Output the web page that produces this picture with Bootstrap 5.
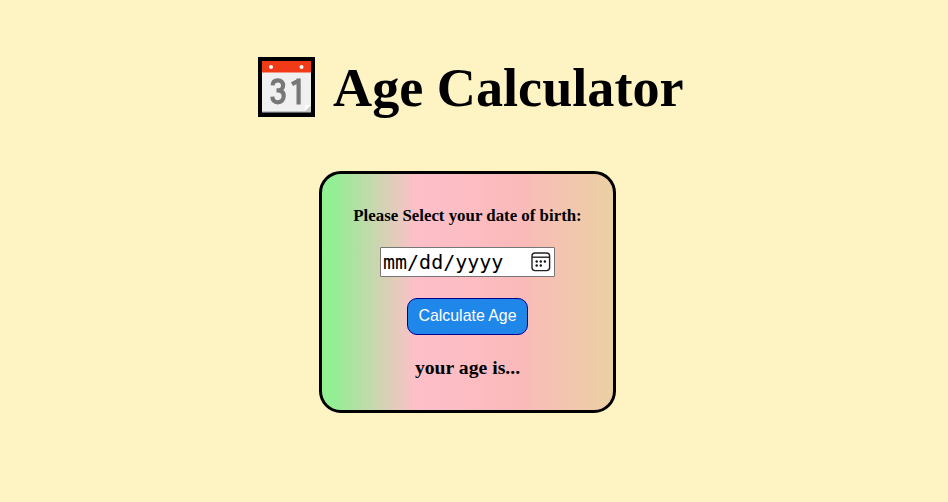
<!DOCTYPE html>
<html lang="en">
<head>
<meta charset="utf-8">
<meta name="viewport" content="width=device-width, initial-scale=1">
<title>Age Calculator</title>
<link href="https://cdn.jsdelivr.net/npm/bootstrap@5.3.0/dist/css/bootstrap.min.css" rel="stylesheet">
<style>
body{background:#fef3c3;color:#000;font-family:"Liberation Serif",serif;min-height:100vh;overflow:hidden}
.page-head{width:427px;margin:56px 0 0 257px;height:62px}
.page-head svg{width:58px;height:60px;margin-top:1px}
.page-head h1{font-size:54.2px;line-height:64px;font-weight:700;margin-left:18px;white-space:nowrap}
.age-box{width:297px;height:242px;margin:53px 0 0 319px;border:3px solid #000;border-radius:22px;
background:linear-gradient(to right,#90f291 0%,#94ee94 4%,#ffbfca 33%,#fababa 68%,#ebd0a3 100%)}
.age-box label{font-size:16.85px;line-height:20px;margin-top:32px}
.date-field{width:175px;height:30px;margin-top:21px;background:#fff;border:1px solid #767676;border-radius:1px;font:20px/28px "DejaVu Sans Mono",monospace;padding:0 3px 0 2px}
.calc-btn{--bs-btn-color:#fff;--bs-btn-bg:#1f87ea;--bs-btn-border-color:#00008b;--bs-btn-hover-bg:#1877d0;--bs-btn-hover-color:#fff;width:121px;height:37px;margin-top:21px;border-radius:10px;font:15.9px/33px "Liberation Sans",Arial,sans-serif}
.calc-btn span{display:block;margin-top:-2px}
.result{font-size:19.7px;line-height:22px;margin-top:21px}
</style>
</head>
<body>
<header class="page-head d-flex">
<svg viewBox="0 0 58 60" class="flex-shrink-0" aria-hidden="true">
<path fill="#000" d="M1 0h57v60H1z"/>
<path fill="#f0f0f0" d="M5 15h49v39H5z"/>
<path fill="#f13a17" d="M5 4h49v11.5H5z"/>
<path fill="#bfc4c5" d="M5 54h49v1.5H5z"/>
<circle cx="14" cy="10" r="2" fill="#fff"/><circle cx="44.5" cy="10" r="2" fill="#fff"/>
<path fill="#ccc" d="M48 54l6-6v6z"/><path fill="#fff" d="M48 54v-5l1-1h5z"/>
<g fill="none" stroke="#777" stroke-width="4.2">
<path d="M15.6 28.4c.2-3.3 2.2-5.1 5.2-5.1 3.3 0 5.3 2.1 5.3 5.1 0 3.1-2.1 5-5.3 5h-1.3M20.8 33.4c3.8 0 5.9 2.2 5.9 5.7 0 3.7-2.3 6.2-5.9 6.2-3.3 0-5.3-2.1-5.5-5.6"/>
<path d="M35 27.2l6.8-3.6M41.6 21.5v26"/>
</g>
</svg>
<h1 class="mb-0">Age Calculator</h1>
</header>
<main class="age-box d-flex flex-column align-items-center">
<label class="fw-bold">Please Select your date of birth:</label>
<div class="date-field d-flex align-items-center justify-content-between" role="textbox" aria-label="Date of birth">
<span>mm/dd/yyyy</span>
<svg width="20" height="20" viewBox="0 0 20 20" aria-hidden="true"><g fill="none" stroke="#222" stroke-width="1.4"><rect x="1" y="1" width="17.6" height="17.6" rx="3"/><path d="M1 5.2h17.6"/></g><g fill="#111"><circle cx="5.7" cy="9.5" r="1.2"/><circle cx="9.8" cy="9.5" r="1.2"/><circle cx="13.9" cy="9.5" r="1.2"/><circle cx="5.7" cy="13.5" r="1.2"/><circle cx="9.8" cy="13.5" r="1.2"/></g></svg>
</div>
<button type="button" class="btn calc-btn p-0"><span>Calculate Age</span></button>
<div class="result fw-bold">your age is...</div>
</main>
<script src="https://cdn.jsdelivr.net/npm/bootstrap@5.3.0/dist/js/bootstrap.bundle.min.js"></script>
</body>
</html>
